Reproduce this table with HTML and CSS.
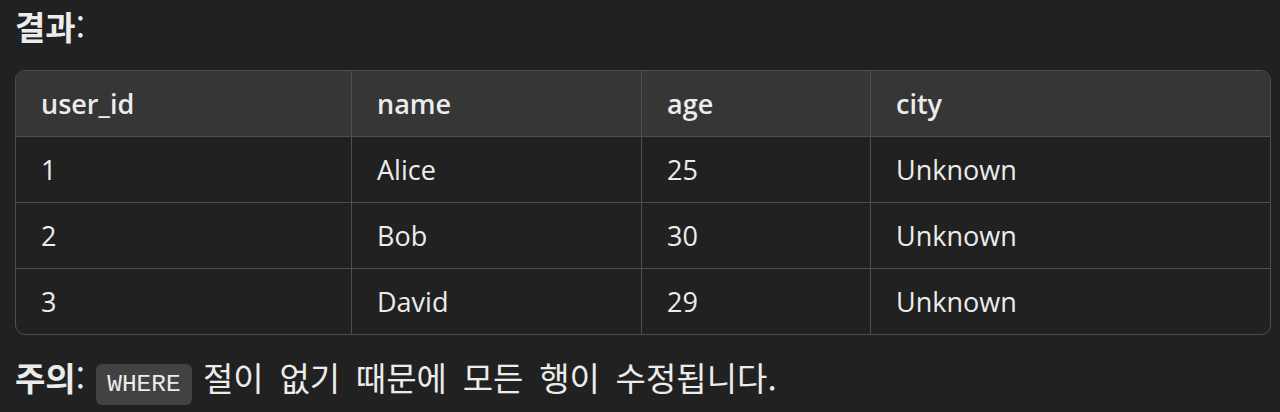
FILE: index.html
```html
<!DOCTYPE html>
<html lang="ko">
<head>
<meta charset="utf-8">
<title>결과</title>
<link rel="stylesheet" href="styles.css">
</head>
<body>
<main class="content">
  <p class="lead"><strong>결과</strong>:</p>
  <div class="table-wrap">
    <table class="result">
      <thead>
        <tr>
          <th class="c1">user_id</th>
          <th class="c2">name</th>
          <th class="c3">age</th>
          <th class="c4">city</th>
        </tr>
      </thead>
      <tbody>
        <tr><td>1</td><td>Alice</td><td>25</td><td>Unknown</td></tr>
        <tr><td>2</td><td>Bob</td><td>30</td><td>Unknown</td></tr>
        <tr><td>3</td><td>David</td><td>29</td><td>Unknown</td></tr>
      </tbody>
    </table>
  </div>
  <p class="note"><strong>주의</strong>: <code class="code">WHERE</code> <span class="tail">절이 없기 때문에 모든 행이 수정됩니다.</span></p>
</main>
</body>
</html>
```

FILE: styles.css
```css
html, body {
  margin: 0;
  padding: 0;
  background: #212121;
}

body {
  color: #ececec;
  font-family: "Open Sans", "Noto Sans CJK KR", sans-serif;
  font-size: 27px;
}

.content {
  padding: 0 9px 0 15px;
}

.lead,
.note {
  font-family: "Noto Sans CJK KR", "Open Sans", sans-serif;
  font-size: 33px;
  line-height: 48px;
}

.lead {
  margin: 0;
  padding-top: 2px;
}

.lead strong,
.note strong {
  font-weight: 700;
}

.table-wrap {
  margin-top: 20px;
  border: 1px solid #4f4f4f;
  border-radius: 10px;
  overflow: hidden;
}

.result {
  width: 100%;
  border-collapse: separate;
  border-spacing: 0;
  table-layout: fixed;
}

.result th,
.result td {
  box-sizing: border-box;
  text-align: left;
  padding: 12px 24px 12px 25px;
  line-height: 41px;
  border-right: 1px solid #4f4f4f;
  border-bottom: 1px solid #4f4f4f;
  white-space: nowrap;
}

.result th {
  background: #363636;
  font-weight: 600;
}

.result td {
  font-weight: 400;
}

.result th:last-child,
.result td:last-child {
  border-right: none;
}

.result tbody tr:last-child td {
  border-bottom: none;
}

.c1 { width: 336px; }
.c2 { width: 290px; }
.c3 { width: 229px; }

.note {
  margin: 18px 0 0;
}

.tail {
  word-spacing: 6.5px;
}

.code {
  font-family: "Liberation Mono", "DejaVu Sans Mono", monospace;
  font-size: 24.5px;
  background: #424242;
  border-radius: 6px;
  padding: 7px 11px;
  margin: 0 2px;
}
```
